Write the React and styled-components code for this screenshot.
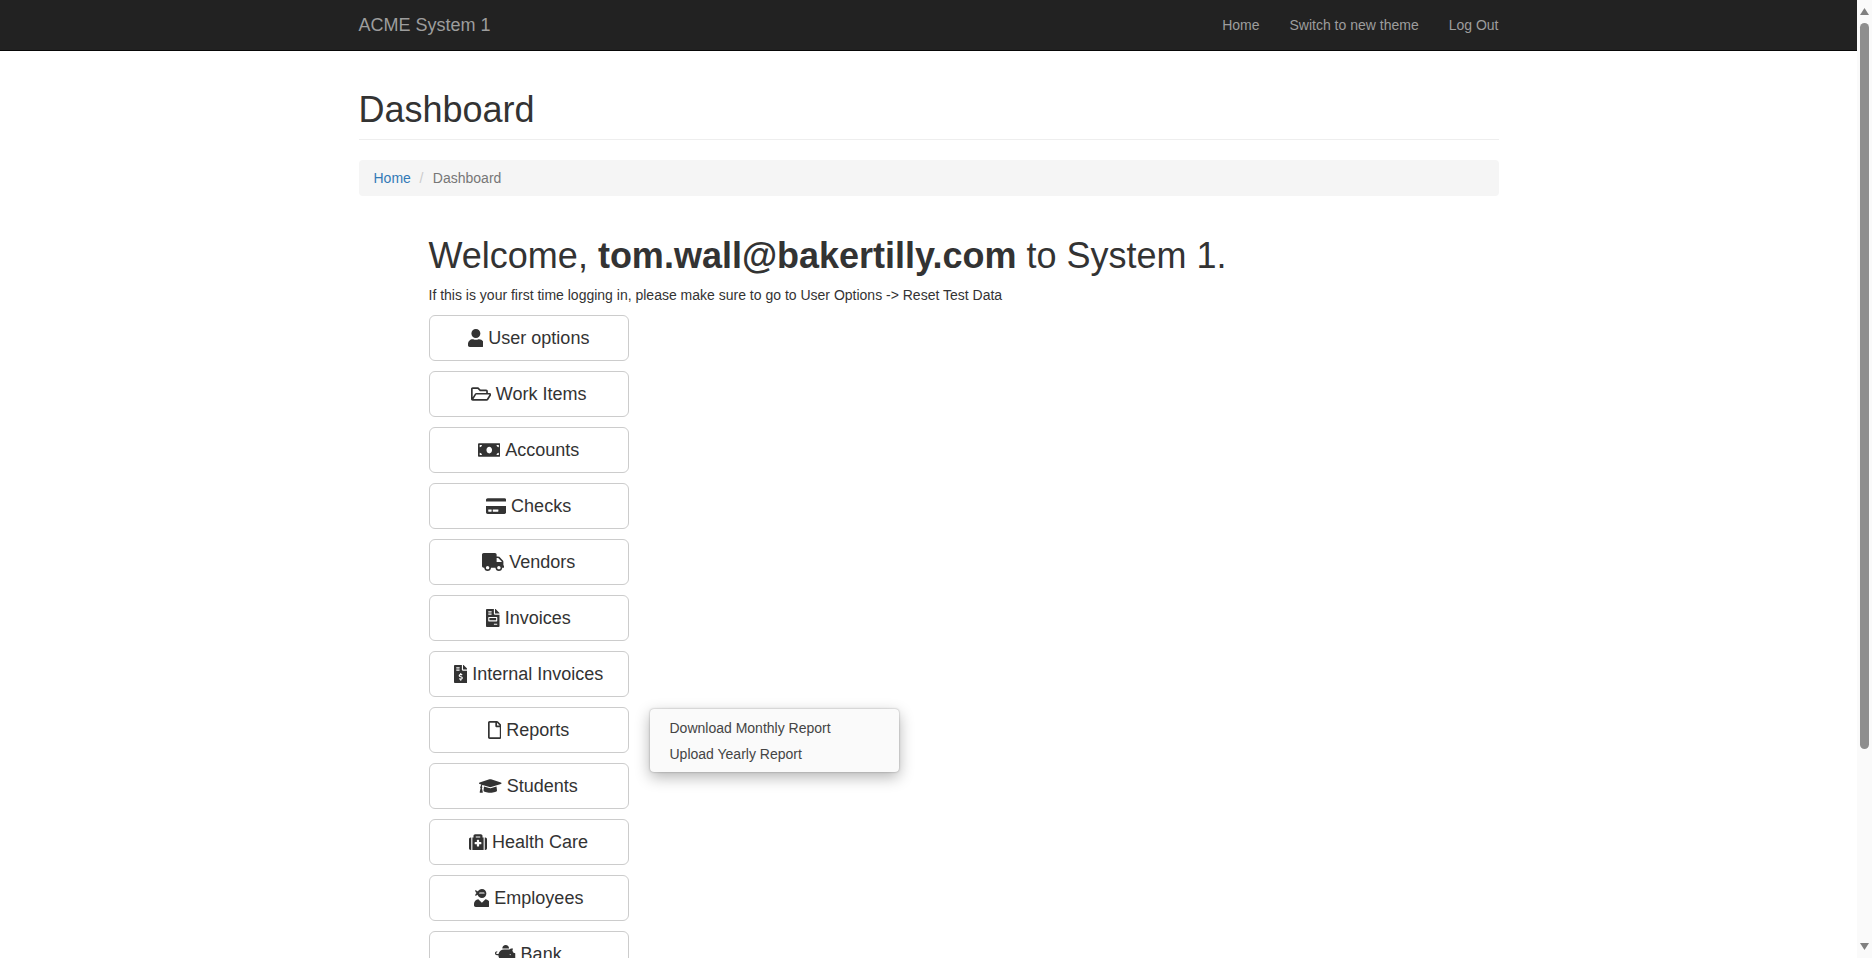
import React from "react";
import styled, { createGlobalStyle } from "styled-components";
import {
  FaUser, FaRegFolderOpen, FaMoneyBill, FaCreditCard, FaTruck, FaFileInvoice,
  FaFileInvoiceDollar, FaRegFile, FaGraduationCap, FaMedkit, FaUserNinja, FaPiggyBank,
} from "react-icons/fa";

const Global = createGlobalStyle`
  * { box-sizing: border-box; }
  html, body { height: 100%; overflow: hidden; }
  body {
    margin: 0; background: #fff; color: #333;
    font-family: "Liberation Sans", Arial, sans-serif; font-size: 14px; line-height: 1.42857;
  }
`;

const Shell = styled.div`
  display: flex; height: 958px; overflow: hidden;
`;
const Page = styled.div`
  flex: 1; min-width: 0; overflow: hidden;
`;
const ScrollTrack = styled.div`
  flex: none; width: 15px; background: #fafafa; display: flex; flex-direction: column;
  align-items: center; padding: 8px 0;
`;
const ThumbBar = styled.div`
  width: 9px; height: 726px; margin-top: 8px; background: #8e8e8e; border-radius: 5px;
`;
const ArrowSpacer = styled.div`
  flex: 1;
`;
const Arrow = styled.svg`
  display: block; width: 9px; height: 7px; fill: #808080;
`;
const Navbar = styled.nav`
  height: 51px; background: #222; border-bottom: 1px solid #080808;
`;
const Container = styled.div`
  width: 1170px; margin: 0 auto; padding: 0 15px;
`;
const NavInner = styled(Container)`
  display: flex; justify-content: space-between; align-items: center; height: 50px;
`;
const Brand = styled.a`
  color: #9d9d9d; font-size: 18px; line-height: 20px;
`;
const NavLinks = styled.div`
  display: flex; gap: 30px;
`;
const NavLink = styled.a`
  color: #9d9d9d; font-size: 14px; line-height: 20px;
`;
const PageHeader = styled.div`
  margin-top: 39px; padding-bottom: 9px; border-bottom: 1px solid #eee; margin-bottom: 20px;
`;
const Title = styled.h1`
  margin: 0; font-size: 36px; font-weight: 500; line-height: 39.6px;
`;
const Breadcrumb = styled.div`
  display: flex; background: #f5f5f5; border-radius: 4px; padding: 9px 15px 7px; height: 36px;
  margin-bottom: 20px; color: #777;
`;
const Crumb = styled.a`
  color: #337ab7;
`;
const Sep = styled.span`
  color: #ccc; width: 22px; padding-right: 1px; text-align: center;
`;
const Main = styled.div`
  padding-left: 70px; margin-top: 40px;
`;
const Welcome = styled.h2`
  margin: 0 0 10px; font-size: 36px; font-weight: 500; line-height: 39.6px;
  strong { font-weight: 700; }
`;
const Lead = styled.p`
  margin: 0 0 10px; font-size: 14px; line-height: 20px; color: #333;
`;
const ButtonList = styled.div`
  display: flex; flex-direction: column; gap: 10px;
`;
const Row = styled.div`
  position: relative; width: 200px;
`;
const Button = styled.a`
  display: flex; align-items: center; justify-content: center; gap: 5px;
  height: 46px; width: 200px; border: 1px solid #ccc; border-radius: 6px; background: #fff;
  color: #333; font-size: 18px; line-height: 24px;
`;
const IconBox = styled.span`
  display: block; flex: none; height: 18px; width: ${(p) => p.$width}px;
  svg { display: block; width: 100%; height: 100%; }
`;
const Menu = styled.div`
  position: absolute; left: 221px; top: 2px; width: 249px; height: 63px;
  background: #fafafa; border-radius: 4px; padding: 6px 20px;
  box-shadow: 0 5px 15px rgba(0,0,0,.3), 0 0 2px rgba(0,0,0,.35);
  z-index: 2; color: #444;
`;
const MenuItem = styled.div`
  font-size: 14px; line-height: 26px; white-space: nowrap;
`;

const items = [
  [FaUser, "User options", 15.75], [FaRegFolderOpen, "Work Items", 20.25], [FaMoneyBill, "Accounts", 22.5],
  [FaCreditCard, "Checks", 20.25], [FaTruck, "Vendors", 22.5], [FaFileInvoice, "Invoices", 13.5],
  [FaFileInvoiceDollar, "Internal Invoices", 13.5], [FaRegFile, "Reports", 13.5], [FaGraduationCap, "Students", 22.5],
  [FaMedkit, "Health Care", 18], [FaUserNinja, "Employees", 15.75], [FaPiggyBank, "Bank", 20.25],
];

export default function App() {
  return (
    <>
      <Global />
      <Shell>
        <Page>
          <Navbar>
            <NavInner>
              <Brand>ACME System 1</Brand>
              <NavLinks>
                <NavLink>Home</NavLink>
                <NavLink>Switch to new theme</NavLink>
                <NavLink>Log Out</NavLink>
              </NavLinks>
            </NavInner>
          </Navbar>
          <Container>
            <PageHeader><Title>Dashboard</Title></PageHeader>
            <Breadcrumb><Crumb>Home</Crumb><Sep>/</Sep><span>Dashboard</span></Breadcrumb>
            <Main>
              <Welcome>Welcome, <strong>tom.wall@bakertilly.com</strong> to System 1.</Welcome>
              <Lead>If this is your first time logging in, please make sure to go to User Options -&gt; Reset Test Data</Lead>
              <ButtonList>
                {items.map(([Icon, label, width]) => (
                  <Row key={label}>
                    <Button><IconBox $width={width}><Icon /></IconBox>{label}</Button>
                    {label === "Reports" && (
                      <Menu>
                        <MenuItem>Download Monthly Report</MenuItem>
                        <MenuItem>Upload Yearly Report</MenuItem>
                      </Menu>
                    )}
                  </Row>
                ))}
              </ButtonList>
            </Main>
          </Container>
        </Page>
        <ScrollTrack>
          <Arrow viewBox="0 0 9 7"><path d="M4.5 0L9 7H0z" /></Arrow>
          <ThumbBar />
          <ArrowSpacer />
          <Arrow viewBox="0 0 9 7"><path d="M4.5 7L9 0H0z" /></Arrow>
        </ScrollTrack>
      </Shell>
    </>
  );
}
